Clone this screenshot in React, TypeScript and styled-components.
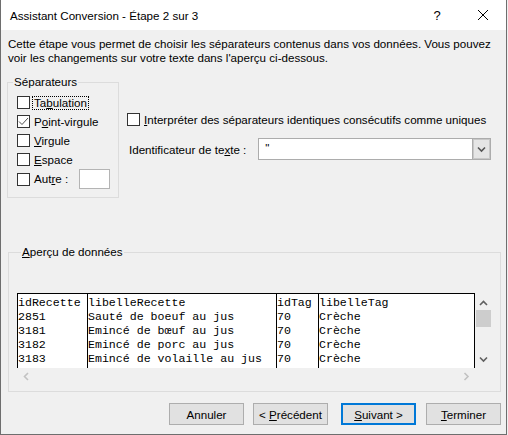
import React from 'react';
import styled, { createGlobalStyle } from 'styled-components';

const GlobalStyle = createGlobalStyle`
    html, body {
        margin: 0;
        padding: 0;
        background: #f0f0f0;
    }
    body {
        font-family: "Liberation Sans", Arial, sans-serif;
        font-size: 11.6px;
        color: #000;
    }
`;

const Window = styled.div`
    display: flex;
    flex-direction: column;
    width: 507px;
    height: 435px;
    box-sizing: border-box;
    border: 1px solid #6e6e6e;
    border-top: none;
    background: #f0f0f0;
    overflow: hidden;
`;

const TitleBar = styled.div`
    display: flex;
    align-items: center;
    height: 30px;
    flex-shrink: 0;
    background: #fff;
    padding-left: 9px;
`;

const Title = styled.div`
    flex: 1;
    font-size: 11.6px;
`;

const TitleButton = styled.div`
    display: flex;
    align-items: center;
    justify-content: center;
    width: 46px;
    height: 30px;
    font-size: 13px;
`;

const Body = styled.div`
    display: flex;
    flex-direction: column;
    flex: 1;
    padding: 0 5px 0 6px;
`;

const Intro = styled.p`
    margin: 7px 0 0 1px;
    line-height: 14px;
    white-space: nowrap;
`;

const TopRow = styled.div`
    display: flex;
    align-items: flex-start;
    margin-top: 10px;
`;

const Group = styled.fieldset<{ $width?: number }>`
    margin: 0;
    width: ${(p) => (p.$width ? `${p.$width}px` : 'auto')};
    box-sizing: border-box;
    border: 1px solid #dcdcdc;
    padding: 0;
    min-width: 0;
`;

const Legend = styled.legend`
    margin-left: 5px;
    padding: 0 1px;
    line-height: 14px;
`;

const SeparatorList = styled.div`
    display: flex;
    flex-direction: column;
    padding: 4px 0 8px 9px;
`;

const CheckRow = styled.label<{ $tall?: boolean }>`
    display: flex;
    align-items: center;
    height: ${(p) => (p.$tall ? 20 : 19)}px;
    white-space: nowrap;
`;

const Box = styled.span`
    display: inline-flex;
    align-items: center;
    justify-content: center;
    width: 13px;
    height: 13px;
    box-sizing: border-box;
    border: 1px solid #333;
    background: #fff;
    flex-shrink: 0;
`;

const LabelText = styled.span<{ $focused?: boolean }>`
    margin-left: 3px;
    line-height: 12px;
    padding: 0 1px;
    outline: ${(p) => (p.$focused ? '1px dotted #000' : 'none')};
`;

const SmallInput = styled.span`
    display: inline-block;
    width: 31px;
    height: 20px;
    box-sizing: border-box;
    margin-left: 10px;
    border: 1px solid #b4b4b4;
    background: #fff;
`;

const Options = styled.div`
    display: flex;
    flex-direction: column;
    margin-left: 8px;
    padding-top: 35px;
    flex: 1;
`;

const TextIdRow = styled.div`
    display: flex;
    align-items: center;
    margin-top: 9px;
    padding-left: 2px;
    white-space: nowrap;
`;

const Select = styled.div`
    display: flex;
    width: 233px;
    height: 22px;
    box-sizing: border-box;
    margin-left: 12px;
    border: 1px solid #acacac;
    background: #fff;
`;

const SelectValue = styled.div`
    flex: 1;
    padding: 2px 0 0 6px;
    line-height: 14px;
`;

const DropButton = styled.div`
    display: flex;
    align-items: center;
    justify-content: center;
    width: 17px;
    background: #e5e5e5;
    border: 1px solid #acacac;
    margin: -1px -1px -1px 0;
    box-shadow: inset 0 0 0 1px #c8c8c8;
`;

const PreviewGroup = styled(Group)`
    margin: 47px 0 0 1px;
    padding: 34px 7px 6px 8px;
`;

const PreviewLegend = styled(Legend)`
    margin-left: 4px;
`;

const PreviewFrame = styled.div`
    display: grid;
    grid-template-columns: 458px 17px;
    grid-template-rows: 75px 17px;
`;

const Sheet = styled.div`
    display: flex;
    background: #fff;
    border-top: 1px solid #000;
    overflow: hidden;
`;

const Column = styled.div<{ $width: number; $last?: boolean }>`
    width: ${(p) => p.$width}px;
    flex-shrink: 0;
    box-sizing: border-box;
    border-left: 1px solid #000;
    border-right: ${(p) => (p.$last ? '1px solid #000' : 'none')};
    padding-top: 2px;
    font-family: "Liberation Mono", "Courier New", monospace;
    font-size: 11.6px;
    line-height: 14px;
    white-space: pre;
    overflow: hidden;
`;

const VScroll = styled.div`
    display: flex;
    flex-direction: column;
    align-items: center;
    padding-top: 7px;
`;

const Thumb = styled.div`
    width: 15px;
    height: 17px;
    margin-top: 3px;
    background: #cdcdcd;
`;

const ScrollSpacer = styled.div`
    flex: 1;
`;

const HScroll = styled.div`
    display: flex;
    align-items: center;
    justify-content: space-between;
    padding: 0 5px 0 6px;
`;

const ButtonRow = styled.div`
    display: flex;
    justify-content: flex-end;
    margin-top: 11px;
`;

const Button = styled.button<{ $default?: boolean; $gap?: number }>`
    width: 75px;
    height: 22px;
    margin-left: ${(p) => p.$gap ?? 0}px;
    padding: 0;
    box-sizing: border-box;
    font-family: "Liberation Sans", Arial, sans-serif;
    font-size: 11.6px;
    color: #000;
    background: #e1e1e1;
    border: ${(p) => (p.$default ? '2px solid #0078d7' : '1px solid #adadad')};
    border-radius: 0;
`;

const Chevron = ({ dir, color }: { dir: 'up' | 'down' | 'left' | 'right'; color: string }) => {
    const paths = {
        up: 'M1 5 L4.5 1.5 L8 5',
        down: 'M1 1.5 L4.5 5 L8 1.5',
        left: 'M5 1 L1.5 4.5 L5 8',
        right: 'M1.5 1 L5 4.5 L1.5 8',
    };
    const horizontal = dir === 'left' || dir === 'right';
    return (
        <svg width={horizontal ? 7 : 9} height={horizontal ? 9 : 7} viewBox={horizontal ? '0 0 7 9' : '0 0 9 7'}>
            <path d={paths[dir]} fill="none" stroke={color} strokeWidth={1.6} />
        </svg>
    );
};

const Check = () => (
    <svg width="11" height="11" viewBox="0 0 11 11">
        <path d="M1 5.5 L4 8.5 L10 2" fill="none" stroke="#505050" strokeWidth={1} />
    </svg>
);

interface SeparatorProps {
    label: React.ReactNode;
    checked?: boolean;
    focused?: boolean;
    children?: React.ReactNode;
}

const Separator = ({ label, checked, focused, children }: SeparatorProps) => (
    <CheckRow $tall={!!children}>
        <Box>{checked && <Check />}</Box>
        <LabelText $focused={focused}>{label}</LabelText>
        {children}
    </CheckRow>
);

const columns = [
    { width: 70, lines: ['idRecette', '2851', '3181', '3182', '3183'] },
    {
        width: 189,
        lines: [
            'libelleRecette',
            'Sauté de boeuf au jus',
            'Emincé de bœuf au jus',
            'Emincé de porc au jus',
            'Emincé de volaille au jus',
        ],
    },
    { width: 42, lines: ['idTag', '70', '70', '70', '70'] },
    { width: 157, lines: ['libelleTag', 'Crèche', 'Crèche', 'Crèche', 'Crèche'] },
];

const App = () => {
    return (
        <>
            <GlobalStyle />
            <Window>
                <TitleBar>
                    <Title>Assistant Conversion - Étape 2 sur 3</Title>
                    <TitleButton>?</TitleButton>
                    <TitleButton>
                        <svg width="10" height="10" viewBox="0 0 10 10">
                            <path d="M0 0 L10 10 M10 0 L0 10" stroke="#000" strokeWidth={1} />
                        </svg>
                    </TitleButton>
                </TitleBar>
                <Body>
                    <Intro>
                        Cette étape vous permet de choisir les séparateurs contenus dans vos données. Vous pouvez
                        <br />
                        voir les changements sur votre texte dans l'aperçu ci-dessous.
                    </Intro>
                    <TopRow>
                        <Group $width={112}>
                            <Legend>Séparateurs</Legend>
                            <SeparatorList>
                                <Separator focused label={<>Ta<u>b</u>ulation</>} />
                                <Separator checked label={<>P<u>o</u>int-virgule</>} />
                                <Separator label={<><u>V</u>irgule</>} />
                                <Separator label={<><u>E</u>space</>} />
                                <Separator label={<>Aut<u>r</u>e :</>}>
                                    <SmallInput />
                                </Separator>
                            </SeparatorList>
                        </Group>
                        <Options>
                            <Separator label={<><u>I</u>nterpréter des séparateurs identiques consécutifs comme uniques</>} />
                            <TextIdRow>
                                Identificateur de te<u>x</u>te :
                                <Select>
                                    <SelectValue>"</SelectValue>
                                    <DropButton>
                                        <Chevron dir="down" color="#555" />
                                    </DropButton>
                                </Select>
                            </TextIdRow>
                        </Options>
                    </TopRow>
                    <PreviewGroup>
                        <PreviewLegend>
                            <u>A</u>perçu de données
                        </PreviewLegend>
                        <PreviewFrame>
                            <Sheet>
                                {columns.map((col, i) => (
                                    <Column key={i} $width={col.width} $last={i === columns.length - 1}>
                                        {col.lines.join('\n')}
                                    </Column>
                                ))}
                            </Sheet>
                            <VScroll>
                                <Chevron dir="up" color="#606060" />
                                <Thumb />
                                <ScrollSpacer />
                                <Chevron dir="down" color="#606060" />
                                <div style={{ height: 5 }} />
                            </VScroll>
                            <HScroll>
                                <Chevron dir="left" color="#c2c2c2" />
                                <Chevron dir="right" color="#c2c2c2" />
                            </HScroll>
                        </PreviewFrame>
                    </PreviewGroup>
                    <ButtonRow>
                        <Button>Annuler</Button>
                        <Button $gap={9}>
                            &lt; <u>P</u>récédent
                        </Button>
                        <Button $gap={13} $default>
                            <u>S</u>uivant &gt;
                        </Button>
                        <Button $gap={10}>
                            <u>T</u>erminer
                        </Button>
                    </ButtonRow>
                </Body>
            </Window>
        </>
    );
};

export default App;
